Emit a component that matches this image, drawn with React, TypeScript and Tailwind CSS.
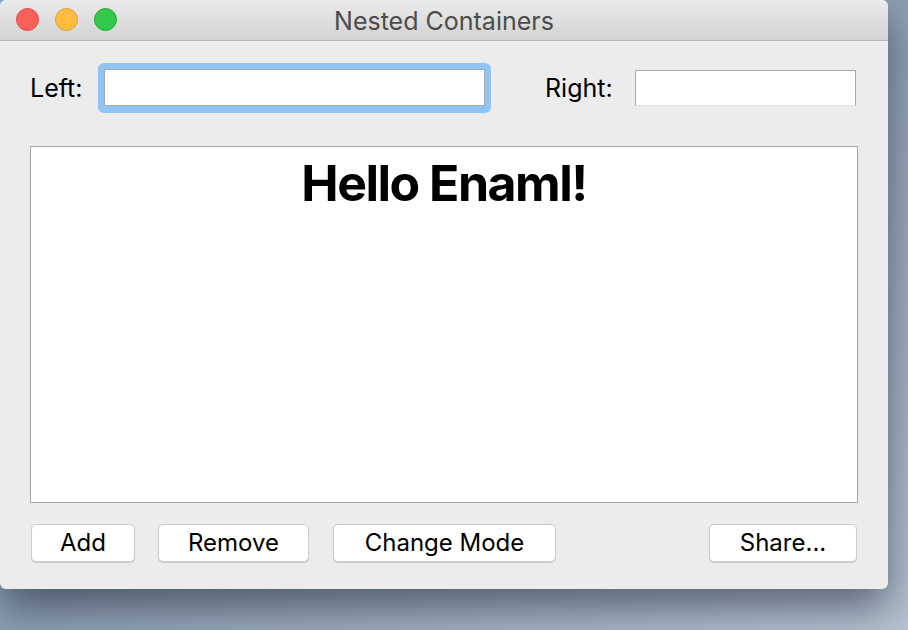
import React from 'react';

const sysFont = { fontFamily: 'Inter, "Noto Sans", "Liberation Sans", sans-serif' };

function Light({ fill, ring }: { fill: string; ring: string }) {
  return <div className={`w-[23px] h-[23px] rounded-full border ${fill} ${ring}`} />;
}

function Btn({ label, w }: { label: string; w: string }) {
  return (
    <button
      className={`${w} h-[38px] rounded-[5px] bg-white border border-[#cbcbcb] shadow-[0_1px_1px_rgba(0,0,0,0.15)] text-[24px] text-black leading-none pb-[1px]`}
    >
      {label}
    </button>
  );
}

export default function App() {
  return (
    <div
      className="w-[908px] h-[630px] overflow-hidden bg-gradient-to-br from-[#8fb0d2] via-[#8d9fb2] to-[#b6c3d1]"
      style={sysFont}
    >
      <div className="w-[888px] h-[589px] rounded-[6px] bg-[#ececec] shadow-[0_18px_40px_rgba(20,30,45,0.55)] flex flex-col overflow-hidden">
        {/* title bar */}
        <div className="h-[41px] shrink-0 grid grid-cols-[1fr_auto_1fr] items-center bg-gradient-to-b from-[#ebebeb] to-[#d3d3d3] border-b border-[#b4b4b4]">
          <div className="flex items-center gap-[16px] pl-[16px] pb-[1px]">
            <Light fill="bg-[#fc605c]" ring="border-[#df4a45]" />
            <Light fill="bg-[#fdbc40]" ring="border-[#dea034]" />
            <Light fill="bg-[#34c84a]" ring="border-[#27a836]" />
          </div>
          <div className="text-[25px] leading-none text-[#4c4c4c] pt-[2px]">Nested Containers</div>
          <div />
        </div>

        {/* fields row */}
        <div className="flex items-center pl-[30px] pt-[22px]">
          <span className="w-[53px] text-[25px] text-black pt-[2px]">Left:</span>
          <div className="ml-[15px] w-[393px] h-[50px] rounded-[6px] bg-[#8ec4f6] p-[6px] pb-[7px]">
            <div className="w-full h-full bg-white border border-[#a9a9a9]" />
          </div>
          <span className="ml-[54px] w-[90px] text-[25px] text-black pt-[2px]">Right:</span>
          <div className="w-[221px] h-[36px] bg-white border border-[#aaaaaa] border-b-[#e2e2e2]" />
        </div>

        {/* main panel */}
        <div className="mx-[30px] mt-[33px] h-[357px] w-[828px] bg-white border border-[#a6a6a6] flex justify-center">
          <h1 className="mt-[6px] text-[50px] font-bold text-black tracking-[-0.03em] leading-[1.2]">Hello Enaml!</h1>
        </div>

        {/* buttons */}
        <div className="flex items-center pl-[31px] pr-[31px] mt-[21px]">
          <Btn label="Add" w="w-[104px]" />
          <div className="ml-[23px]"><Btn label="Remove" w="w-[151px]" /></div>
          <div className="ml-[24px]"><Btn label="Change Mode" w="w-[223px]" /></div>
          <div className="ml-auto"><Btn label="Share..." w="w-[148px]" /></div>
        </div>
      </div>
    </div>
  );
}
